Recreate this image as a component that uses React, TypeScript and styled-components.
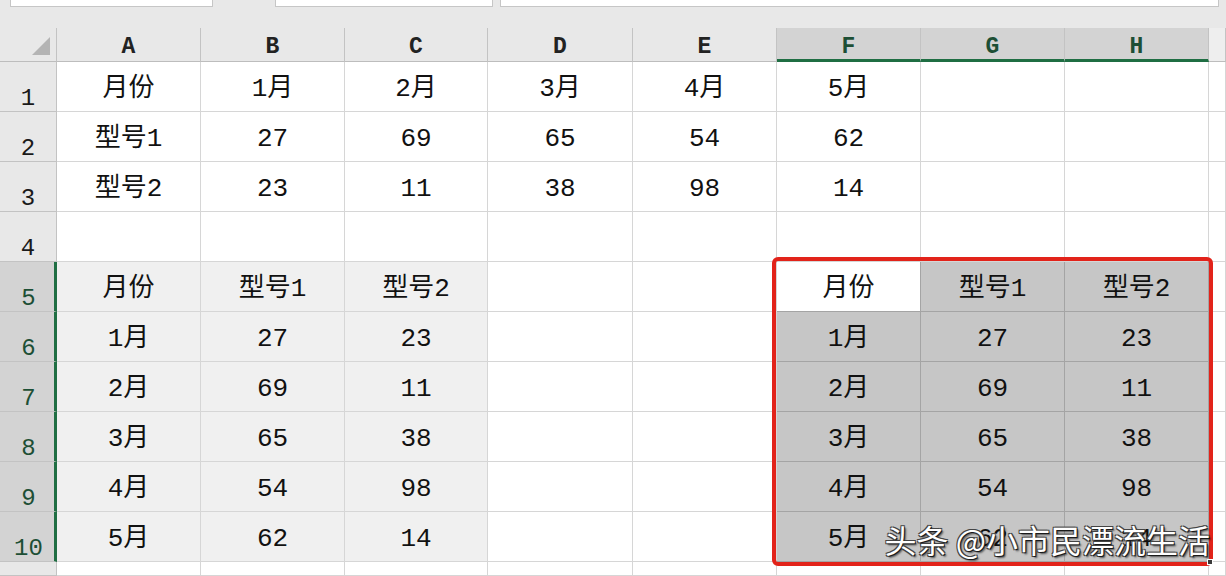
import React from 'react';
import styled, { createGlobalStyle } from 'styled-components';

const GlobalStyle = createGlobalStyle`
  html, body { margin: 0; padding: 0; background: #ffffff; overflow: hidden; }
  *, *::before, *::after { box-sizing: border-box; }
`;

const COL_TEMPLATE = '57px 144px 144px 143px 145px 144px 144px 144px 144px 1fr';
const ROW_TEMPLATE = '34px repeat(10, 50px) 1fr';

const GREEN = '#1f6e43';
const FONT = `"Liberation Mono", "Noto Sans CJK SC", monospace`;

type Tone = 'plain' | 'soft' | 'sel' | 'active';

const Page = styled.div`
  width: 1226px;
  height: 576px;
  display: flex;
  flex-direction: column;
  overflow: hidden;
  background: #ffffff;
  font-family: ${FONT};
`;

const TopBar = styled.div`
  height: 28px;
  flex: none;
  background: #e8e8e8;
  display: flex;
  align-items: flex-start;
`;

const FieldBox = styled.div<{ $left: number; $width: number }>`
  margin-left: ${(p) => p.$left}px;
  width: ${(p) => p.$width}px;
  height: 7px;
  background: #ffffff;
  border: 1px solid #c6c6c6;
  border-top: none;
`;

const SheetWrap = styled.div`
  position: relative;
  flex: 1;
`;

const Sheet = styled.div`
  display: grid;
  grid-template-columns: ${COL_TEMPLATE};
  grid-template-rows: ${ROW_TEMPLATE};
  height: 100%;
`;

const Corner = styled.div`
  background: #e8e8e8;
  border-right: 1px solid #c3c3c3;
  border-bottom: 1px solid #bdbdbd;
  position: relative;
  &::after {
    content: '';
    position: absolute;
    left: 32px;
    top: 9px;
    width: 0;
    height: 0;
    border-left: 18px solid transparent;
    border-bottom: 18px solid #b4b4b4;
  }
`;

const ColHead = styled.div<{ $sel?: boolean; $blank?: boolean }>`
  background: ${(p) => (p.$blank ? '#eeeeee' : p.$sel ? '#d3d3d3' : '#e8e8e8')};
  border-right: 1px solid #c3c3c3;
  border-bottom: ${(p) => (p.$sel ? `3px solid ${GREEN}` : '1px solid #bdbdbd')};
  color: ${(p) => (p.$sel ? '#1d4f35' : '#222222')};
  font-size: 23px;
  font-weight: bold;
  display: flex;
  align-items: center;
  justify-content: center;
  padding-top: ${(p) => (p.$sel ? '7px' : '5px')};
`;

const RowHead = styled.div<{ $sel?: boolean }>`
  background: ${(p) => (p.$sel ? '#d3d3d3' : '#e8e8e8')};
  border-right: ${(p) => (p.$sel ? `3px solid ${GREEN}` : '1px solid #c3c3c3')};
  border-bottom: 1px solid #c3c3c3;
  color: ${(p) => (p.$sel ? '#1d4f35' : '#1a1a1a')};
  font-size: 24px;
  display: flex;
  align-items: flex-end;
  justify-content: center;
  padding-bottom: 0;
  padding-left: ${(p) => (p.$sel ? '3px' : '0')};
  line-height: 1;
`;

const toneBg: Record<Tone, string> = {
  plain: '#ffffff',
  soft: '#f0f0f0',
  sel: '#c6c6c6',
  active: '#ffffff',
};

const Cell = styled.div<{ $tone: Tone }>`
  background: ${(p) => toneBg[p.$tone]};
  border-right: 1px solid
    ${(p) => (p.$tone === 'sel' || p.$tone === 'active' ? '#a4a4a4' : '#d6d6d6')};
  border-bottom: 1px solid
    ${(p) => (p.$tone === 'sel' || p.$tone === 'active' ? '#a4a4a4' : '#d6d6d6')};
  color: #111111;
  font-size: 26px;
  display: flex;
  align-items: center;
  justify-content: center;
  padding-top: 5px;
  white-space: nowrap;
  line-height: 1;
`;

const Overlay = styled.div`
  position: absolute;
  inset: 0;
  display: grid;
  grid-template-columns: ${COL_TEMPLATE};
  grid-template-rows: ${ROW_TEMPLATE};
  pointer-events: none;
`;

const RedFrame = styled.div`
  grid-column: 7 / 10;
  grid-row: 6 / 12;
  margin: -5px -4px -4px -5px;
  border: 4px solid #e2231a;
  border-radius: 6px;
`;

const FillHandle = styled.div`
  grid-column: 9 / 10;
  grid-row: 11 / 12;
  justify-self: end;
  align-self: end;
  width: 6px;
  height: 6px;
  margin: 0 -4px -3px 0;
  background: #3a3a3a;
  border: 1px solid #ffffff;
`;

const Watermark = styled.div`
  grid-column: 6 / 10;
  grid-row: 11 / 12;
  justify-self: end;
  align-self: end;
  margin: 0 -1px 3px 0;
  font-family: "Noto Sans CJK SC", sans-serif;
  font-size: 32px;
  line-height: 40px;
  color: #ffffff;
  white-space: nowrap;
  text-shadow: 1px 1px 0 #1a1a1a, -1px -1px 0 #444, 1px -1px 0 #444, -1px 1px 0 #444,
    2px 2px 2px rgba(0, 0, 0, 0.6);
`;

const ROWS: string[][] = [
  ['月份', '1月', '2月', '3月', '4月', '5月', '', ''],
  ['型号1', '27', '69', '65', '54', '62', '', ''],
  ['型号2', '23', '11', '38', '98', '14', '', ''],
  ['', '', '', '', '', '', '', ''],
  ['月份', '型号1', '型号2', '', '', '月份', '型号1', '型号2'],
  ['1月', '27', '23', '', '', '1月', '27', '23'],
  ['2月', '69', '11', '', '', '2月', '69', '11'],
  ['3月', '65', '38', '', '', '3月', '65', '38'],
  ['4月', '54', '98', '', '', '4月', '54', '98'],
  ['5月', '62', '14', '', '', '5月', '62', '14'],
];

const COLS = ['A', 'B', 'C', 'D', 'E', 'F', 'G', 'H'];

function toneFor(r: number, c: number): Tone {
  if (r >= 5 && c <= 2) return 'soft';
  if (r >= 5 && c >= 5) return r === 5 && c === 5 ? 'active' : 'sel';
  return 'plain';
}

export default function App() {
  return (
    <>
      <GlobalStyle />
      <Page>
        <TopBar>
          <FieldBox $left={10} $width={203} />
          <FieldBox $left={62} $width={218} />
          <FieldBox $left={7} $width={719} />
        </TopBar>
        <SheetWrap>
          <Sheet>
            <Corner />
            {COLS.map((c, i) => (
              <ColHead key={c} $sel={i >= 5}>
                {c}
              </ColHead>
            ))}
            <ColHead $blank />
            {ROWS.map((row, ri) => {
              const r = ri + 1;
              return (
                <React.Fragment key={r}>
                  <RowHead $sel={r >= 5}>{r}</RowHead>
                  {row.map((v, ci) => (
                    <Cell key={ci} $tone={toneFor(r, ci)}>
                      {v}
                    </Cell>
                  ))}
                  <Cell $tone="plain" />
                </React.Fragment>
              );
            })}
            <RowHead />
            {COLS.map((c) => (
              <Cell key={c} $tone="plain" />
            ))}
            <Cell $tone="plain" />
          </Sheet>
          <Overlay>
            <RedFrame />
            <FillHandle />
            <Watermark>头条 @小市民漂流生活</Watermark>
          </Overlay>
        </SheetWrap>
      </Page>
    </>
  );
}
